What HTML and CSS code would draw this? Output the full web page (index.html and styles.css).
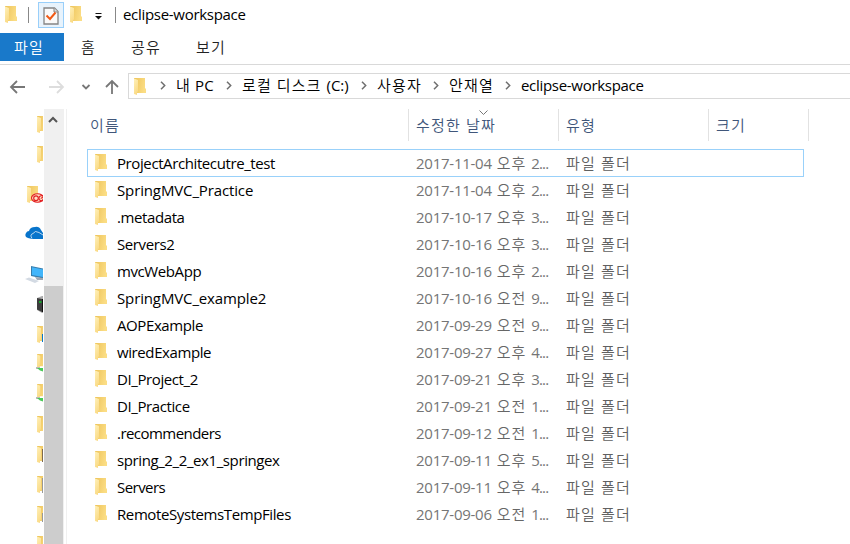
FILE: index.html
```
<!DOCTYPE html>
<html lang="ko">
<head>
<meta charset="utf-8">
<title>eclipse-workspace</title>
<link rel="stylesheet" href="styles.css">
</head>
<body>
<svg class="defs" width="0" height="0">
  <defs>
    <linearGradient id="back" x1="0" y1="0" x2="1" y2="0.3"><stop offset="0" stop-color="#edc35a"/><stop offset="1" stop-color="#fbdd84"/></linearGradient>
    <linearGradient id="front" x1="0" y1="0" x2="0.4" y2="1"><stop offset="0" stop-color="#fff0b8"/><stop offset="1" stop-color="#fadb87"/></linearGradient>
    <symbol id="folder" viewBox="0 0 12 17"><path fill="url(#back)" d="M0 0H11V10.5H12V15H3V16H0Z"/><path fill="url(#front)" d="M0 0.5L4 2V13.5L3 14V17L0 16Z"/></symbol>
    <symbol id="chevron" viewBox="0 0 6 9"><path d="M1 0.8L4.7 4.5L1 8.2" fill="none" stroke="#6f6f6f" stroke-width="1.5"/></symbol>
  </defs>
</svg>
<header class="titlebar">
  <svg class="folder"><use href="#folder"/></svg>
  <i class="rule"></i>
  <span class="quick"><svg width="16" height="18" viewBox="0 0 16 18"><path d="M1 1H11.5L15 4.5V17H1Z" fill="#fafafa" stroke="#858585" stroke-width="1.3"/><path d="M11 1V5H15" fill="#ddd" stroke="#858585"/><path d="M3.5 8.5L7 12L12.5 5.5" fill="none" stroke="#f15a16" stroke-width="2"/></svg></span>
  <svg class="folder second"><use href="#folder"/></svg>
  <svg class="drop" width="7" height="7" viewBox="0 0 7 7"><path d="M0.5 0.5H6.5" stroke="#111"/><path d="M0 3H7L3.5 6.5Z" fill="#111"/></svg>
  <i class="rule last"></i>
  <span class="title">eclipse-workspace</span>
</header>
<nav class="tabs"><span class="file">파일</span><span class="home">홈</span><span class="share">공유</span><span>보기</span></nav>
<div class="navigation">
  <svg class="arrows" width="128" height="26" viewBox="0 0 128 26" fill="none" stroke-width="1.8"><path d="M25 14H11M17 8L11 14L17 20" stroke="#777"/><path d="M49 14H63M57 8L63 14L57 20" stroke="#ddd"/><path d="M82.5 12L86 15.5L89.5 12" stroke="#777"/><path d="M112 21V8M106 14L112 8L118 14" stroke="#777"/></svg>
  <div class="address">
    <svg class="folder"><use href="#folder"/></svg>
    <svg class="chevron c1"><use href="#chevron"/></svg><span class="pc">내 <span class="latin">PC</span></span>
    <svg class="chevron"><use href="#chevron"/></svg><span class="disk">로컬 디스크 <span class="latin">(C:)</span></span>
    <svg class="chevron"><use href="#chevron"/></svg><span class="users">사용자</span>
    <svg class="chevron"><use href="#chevron"/></svg><span class="user">안재열</span>
    <svg class="chevron"><use href="#chevron"/></svg><span class="title">eclipse-workspace</span>
  </div>
</div>
<main>
  <aside>
    <div class="node"><svg class="folder"><use href="#folder"/></svg></div>
    <div class="node"><svg class="folder"><use href="#folder"/></svg></div>
    <div class="node group wide"><svg width="18" height="18" viewBox="0 0 18 18"><use href="#folder" x="0" y="0" width="12" height="17"/><g fill="none" stroke="#e21d20" stroke-width="1.1"><ellipse cx="10.5" cy="12" rx="6" ry="4.2" fill="#ffe2c5"/><circle cx="9" cy="12.2" r="2.3"/><path d="M16 9.5Q12 9.5 12 12.2T16 14.8M16 11.5Q14 11.5 14 12.8"/></g></svg></div>
    <div class="node group cloud"><svg width="20" height="14" viewBox="0 0 20 14"><path fill="#0874cb" d="M3 12Q-1 11 1 7Q2 5 4 5Q5 1 10 1Q14 0 16 4L18 7V13H7Z"/><path d="M7 12.5Q4.5 8.5 8 7.5Q10 4 14 6.5L18 9" fill="none" stroke="#fff" stroke-width="0.7"/></svg></div>
    <div class="node group cloud"><svg width="20" height="18" viewBox="0 0 20 18"><path d="M6 0L20 3V13L6 10Z" fill="#377eae"/><path d="M7 1.3L20 4V11.5L7 9Z" fill="#42b5fa"/><path d="M0 13L4 11.5L14 15L10 17Z" fill="#d3dae3"/><path d="M10 11L19 12V14H12Z" fill="#a0a8b3"/></svg></div>
    <div class="node"><svg width="12" height="17" viewBox="0 0 12 17"><path d="M0 2L5 0H12V17H5L0 14Z" fill="#aaa"/><path d="M0 2L5 3V16L0 13.5Z" fill="#3d3d3d"/><path d="M5 3H6V16H5Z" fill="#111"/><path d="M2 5H4.5V7H2Z" fill="#17a52b"/></svg></div>
    <div class="node"><svg class="folder"><use href="#folder"/><path d="M5 8H12V16H5Z" fill="#0878cb"/></svg></div>
    <div class="node shared"><svg width="14" height="19" viewBox="0 0 14 19"><use href="#folder" x="0" y="0" width="12" height="14"/><path d="M0 13H4V15H0Z" fill="#bbb"/><path d="M1 14L9 14V18L4 16.5Z" fill="#48c957"/></svg></div>
    <div class="node shared"><svg width="14" height="19" viewBox="0 0 14 19"><use href="#folder" x="0" y="0" width="12" height="14"/><path d="M0 13H4V15H0Z" fill="#bbb"/><path d="M1 14L9 14V18L4 16.5Z" fill="#48c957"/></svg></div>
    <div class="node"><svg class="folder"><use href="#folder"/></svg></div>
    <div class="node"><svg class="folder"><use href="#folder"/><path d="M5 3H12V16H5Z" fill="#7e6b51"/></svg></div>
    <div class="node"><svg class="folder"><use href="#folder"/><path d="M5 2H12V17H5Z" fill="#999"/></svg></div>
    <div class="node"><svg class="folder"><use href="#folder"/><path d="M5 7H12V16H5Z" fill="#999"/></svg></div>
    <div class="node"><svg class="folder"><use href="#folder"/></svg></div>
  </aside>
  <div class="scroll"><svg width="10" height="7" viewBox="0 0 10 7"><path d="M1 6L5 2L9 6" fill="none" stroke="#555" stroke-width="2"/></svg><div class="thumb"></div></div>
  <section class="files">
    <div class="columns"><span>이름</span><span>수정한 날짜<svg class="sort" width="9" height="5" viewBox="0 0 9 5"><path d="M0.5 0.5L4.5 4.5L8.5 0.5" fill="none" stroke="#777"/></svg></span><span>유형</span><span>크기</span></div>
    <div class="row selected"><svg class="folder"><use href="#folder"/></svg><span class="name">ProjectArchitecutre_test</span><span class="date"><time>2017-11-04</time> 오후 <b>2...</b></span><span class="type">파일 폴더</span></div>
    <div class="row"><svg class="folder"><use href="#folder"/></svg><span class="name loose">SpringMVC_Practice</span><span class="date"><time>2017-11-04</time> 오후 <b>2...</b></span><span class="type">파일 폴더</span></div>
    <div class="row"><svg class="folder"><use href="#folder"/></svg><span class="name">.metadata</span><span class="date"><time>2017-10-17</time> 오후 <b>3...</b></span><span class="type">파일 폴더</span></div>
    <div class="row"><svg class="folder"><use href="#folder"/></svg><span class="name">Servers2</span><span class="date"><time>2017-10-16</time> 오후 <b>3...</b></span><span class="type">파일 폴더</span></div>
    <div class="row"><svg class="folder"><use href="#folder"/></svg><span class="name">mvcWebApp</span><span class="date"><time>2017-10-16</time> 오후 <b>2...</b></span><span class="type">파일 폴더</span></div>
    <div class="row"><svg class="folder"><use href="#folder"/></svg><span class="name loose">SpringMVC_example2</span><span class="date"><time>2017-10-16</time> 오전 <b>9...</b></span><span class="type">파일 폴더</span></div>
    <div class="row"><svg class="folder"><use href="#folder"/></svg><span class="name">AOPExample</span><span class="date"><time>2017-09-29</time> 오전 <b>9...</b></span><span class="type">파일 폴더</span></div>
    <div class="row"><svg class="folder"><use href="#folder"/></svg><span class="name">wiredExample</span><span class="date"><time>2017-09-27</time> 오후 <b>4...</b></span><span class="type">파일 폴더</span></div>
    <div class="row"><svg class="folder"><use href="#folder"/></svg><span class="name">DI_Project_2</span><span class="date"><time>2017-09-21</time> 오후 <b>3...</b></span><span class="type">파일 폴더</span></div>
    <div class="row"><svg class="folder"><use href="#folder"/></svg><span class="name">DI_Practice</span><span class="date"><time>2017-09-21</time> 오전 <b>1...</b></span><span class="type">파일 폴더</span></div>
    <div class="row"><svg class="folder"><use href="#folder"/></svg><span class="name tight">.recommenders</span><span class="date"><time>2017-09-12</time> 오전 <b>1...</b></span><span class="type">파일 폴더</span></div>
    <div class="row"><svg class="folder"><use href="#folder"/></svg><span class="name">spring_2_2_ex1_springex</span><span class="date"><time>2017-09-11</time> 오후 <b>5...</b></span><span class="type">파일 폴더</span></div>
    <div class="row"><svg class="folder"><use href="#folder"/></svg><span class="name tight">Servers</span><span class="date"><time>2017-09-11</time> 오후 <b>4...</b></span><span class="type">파일 폴더</span></div>
    <div class="row"><svg class="folder"><use href="#folder"/></svg><span class="name">RemoteSystemsTempFiles</span><span class="date"><time>2017-09-06</time> 오전 <b>1...</b></span><span class="type">파일 폴더</span></div>
  </section>
</main>
</body>
</html>
```

FILE: styles.css
```
* { box-sizing: border-box; }
body { margin: 0; width: 850px; height: 544px; overflow: hidden; background: #fff; color: #000; font: 350 15px/20px "Open Sans", "Noto Sans CJK KR", sans-serif; white-space: nowrap; }
svg { display: block; flex: none; }
.defs { position: absolute; }
.folder { width: 12px; height: 17px; }
.titlebar { height: 33px; display: flex; align-items: flex-start; padding-left: 5px; }
.titlebar .folder { margin-top: 6px; }
.rule { width: 1px; height: 16px; background: #888; margin: 7px 0 0 11px; }
.quick { width: 26px; height: 26px; margin: 2px 0 0 9px; padding: 4px; background: #e8f3fc; border: 1px solid #99cffa; }
.titlebar .second { margin-left: 6px; }
.drop { margin: 13px 0 0 13px; }
.rule.last { margin-left: 13px; }
.title { font-weight: 400; font-size: 15px; letter-spacing: -0.3px; }
.titlebar .title { margin: 4px 0 0 7px; }
.tabs { height: 32px; display: flex; border-bottom: 1px solid #d9d9d9; line-height: 28px; color: #222; letter-spacing: 1.2px; }
.tabs .file { width: 64px; height: 28px; background: #1979ca; color: #fff; padding-left: 14px; margin-right: 17px; }
.home { width: 50px; }
.share { width: 65px; }
.navigation { height: 44px; display: flex; padding-top: 8px; }
.address { flex: 1; height: 26px; display: flex; align-items: center; border: 1px solid #d9d9d9; border-right: 0; padding-left: 5px; }
.address > span { margin-top: -2px; }
.chevron { width: 6px; height: 9px; margin: -2px 10px 0 0; }
.chevron.c1 { margin-left: 14px; }
.pc { width: 50px; letter-spacing: 0.7px; }
.disk { width: 119px; letter-spacing: 1.1px; }
.latin { font-weight: 400; letter-spacing: 0; }
.users { width: 56px; letter-spacing: 1.2px; }
.user { width: 56px; letter-spacing: 1.2px; }
main { display: flex; height: 435px; }
aside { width: 44px; padding: 1px 1px 0 0; overflow: hidden; }
.node { height: 30px; width: 43px; padding: 6px 0 0 37px; overflow: hidden; }
.group { margin-top: 10px; }
.wide { padding-left: 27px; }
.cloud { padding-left: 25px; }
.shared { padding: 4px 0 0 36px; }
.scroll { width: 20px; background: #f0f0f0; padding: 7px 1px 0 0; display: flex; flex-direction: column; }
.scroll > svg { margin-left: 4px; }
.thumb { flex: 1; background: #cdcdcd; margin-top: 163px; }
.files { flex: 1; margin-left: 2px; padding-left: 20px; border-left: 1px solid #f0f0f0; }
.columns { display: flex; height: 32px; margin-bottom: 8px; color: #40567a; line-height: 32px; letter-spacing: 1.2px; }
.columns span { position: relative; width: 150px; border-right: 1px solid #e2e2e2; padding-left: 7px; }
.columns span:first-child { width: 322px; padding-left: 3px; }
.columns span:last-child { width: 100px; }
.sort { position: absolute; left: 70px; top: 1px; }
.row { width: 717px; height: 27px; padding: 1px 0 0 8px; display: flex; line-height: 27px; }
.row.selected { height: 28px; margin-bottom: -1px; padding: 0 0 0 7px; border: 1px solid #99d1fa; }
.row .folder { margin: 4px 10px 0 0; }
.name { width: 299px; font-weight: 400; letter-spacing: -0.4px; }
.loose { letter-spacing: -0.13px; }
.tight { letter-spacing: -0.55px; }
.date { width: 150px; color: #666; letter-spacing: 1px; }
.date time { font-weight: 400; color: #757575; letter-spacing: -0.25px; }
.date b { font-weight: 400; color: #757575; letter-spacing: -0.8px; }
.type { color: #606060; letter-spacing: 1.2px; }
```
